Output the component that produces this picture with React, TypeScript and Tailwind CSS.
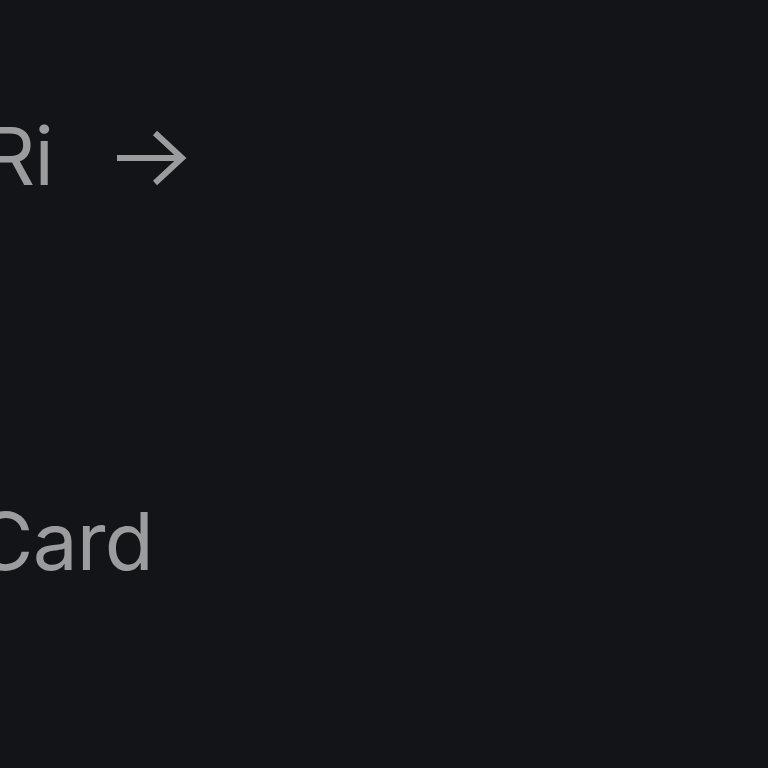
import React from 'react';

export default function App() {
  return (
    <div className="w-[768px] h-[768px] overflow-hidden bg-[#131418] text-[#9c9c9e] font-['Inter','Liberation_Sans',sans-serif]">
      {/* Link row, clipped at the left edge */}
      <div className="pt-[116px] flex items-center">
        <div className="w-[53px] flex justify-end">
          <span className="text-[80px] leading-none whitespace-nowrap tracking-[-0.01em]">Ri</span>
        </div>
        <svg
          className="ml-[64px] mt-[4px]"
          width="70"
          height="56"
          viewBox="0 0 70 56"
          fill="none"
          stroke="currentColor"
          strokeWidth="6"
          strokeLinecap="butt"
          strokeLinejoin="miter"
        >
          <path d="M0 28 H65" />
          <path d="M38 3 L65 28 L38 53" />
        </svg>
      </div>

      {/* Card label */}
      <div className="mt-[305px] flex">
        <div className="w-[153px] flex justify-end">
          <span className="text-[80px] leading-none whitespace-nowrap tracking-[-0.01em]">Card</span>
        </div>
      </div>
    </div>
  );
}
